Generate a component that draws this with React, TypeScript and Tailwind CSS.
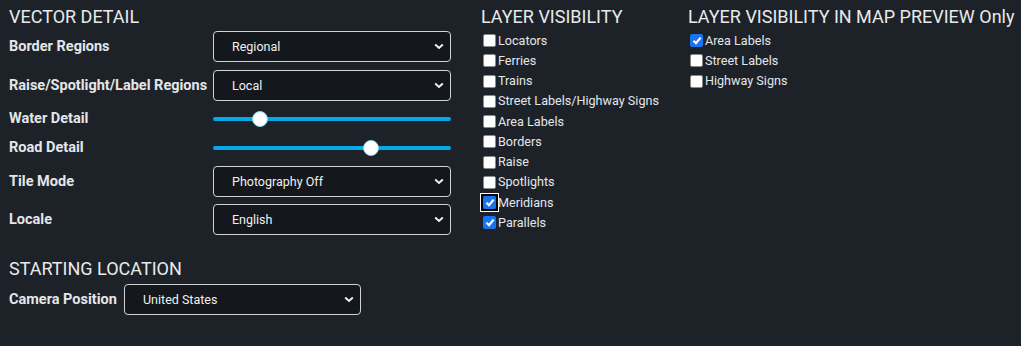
import { ReactNode } from 'react';

function Select({ value, width = 'w-[238px]' }: { value: string; width?: string }) {
  return (
    <div
      className={`${width} h-[31px] flex items-center justify-between rounded-[4px] border border-[#cfd2d6] bg-[#14171b] pl-[18px] pr-[5px] text-[12.5px] text-[#f0f0f0]`}
    >
      <span className="pt-[1px]">{value}</span>
      <svg width="10" height="7" viewBox="0 0 10 7" className="mr-[1px]">
        <polyline points="1.2,1.5 5,5 8.8,1.5" fill="none" stroke="#f2f2f2" strokeWidth="2" />
      </svg>
    </div>
  );
}

function Slider({ pos }: { pos: number }) {
  return (
    <div className="relative w-[238px] h-[18px] flex items-center">
      <div className="w-full h-[4px] rounded-full bg-[#04a9e6]" />
      <div
        className="absolute top-[1px] w-[16px] h-[16px] rounded-full bg-white border border-[#7fd3f2]"
        style={{ left: pos - 8 }}
      />
    </div>
  );
}

function Row({ label, h, mt, children }: { label: string; h: string; mt?: string; children: ReactNode }) {
  return (
    <div className={`flex items-center ${h} ${mt ?? ''}`}>
      <div className="w-[204px] pt-[1px] text-[14.5px] font-bold text-[#e4e6e8]">{label}</div>
      {children}
    </div>
  );
}

function Check({ label, checked, focus }: { label: string; checked?: boolean; focus?: boolean }) {
  return (
    <label className="flex items-center h-[20.25px] text-[12.6px] text-[#e4e6e8]">
      <span
        className={`flex items-center justify-center w-[13px] h-[13px] ml-[2px] mr-[2px] ${
          focus ? 'outline outline-2 outline-black ring-1 ring-white ring-offset-2 ring-offset-black' : ''
        }`}
      >
        {checked ? (
          <span className="w-[13px] h-[13px] rounded-[2px] bg-[#1a73f0] flex items-center justify-center">
            <svg width="10" height="9" viewBox="0 0 10 9">
              <polyline points="1.5,4.8 4,7.2 8.6,1.6" fill="none" stroke="white" strokeWidth="2.2" />
            </svg>
          </span>
        ) : (
          <span className="w-[13px] h-[13px] rounded-[2px] bg-white border border-[#8a8a8a]" />
        )}
      </span>
      <span className="pt-[1px]">{label}</span>
    </label>
  );
}

export default function App() {
  return (
    <div
      className="w-[1021px] h-[346px] bg-[#1d2228] text-[#e6e8ea] flex pl-[9px] overflow-hidden"
      style={{ fontFamily: 'Roboto, "Liberation Sans", sans-serif' }}
    >
      {/* left column */}
      <div className="w-[442px] flex flex-col">
        <h2 className="text-[18px] leading-[22px] mt-[6px] text-[#e8eaec]">VECTOR DETAIL</h2>
        <Row label="Border Regions" h="h-[31px]" mt="mt-[3px]">
          <Select value="Regional" />
        </Row>
        <Row label="Raise/Spotlight/Label Regions" h="h-[31px]" mt="mt-[8px]">
          <Select value="Local" />
        </Row>
        <Row label="Water Detail" h="h-[35px]">
          <Slider pos={47} />
        </Row>
        <Row label="Road Detail" h="h-[23px]">
          <Slider pos={158} />
        </Row>
        <Row label="Tile Mode" h="h-[31px]" mt="mt-[7px]">
          <Select value="Photography Off" />
        </Row>
        <Row label="Locale" h="h-[31px]" mt="mt-[7px]">
          <Select value="English" />
        </Row>

        <h2 className="text-[18px] leading-[22px] mt-[23px] text-[#e8eaec]">STARTING LOCATION</h2>
        <div className="flex items-center h-[31px] mt-[4px]">
          <div className="w-[115px] pt-[1px] text-[14.5px] font-bold text-[#e4e6e8]">Camera Position</div>
          <Select value="United States" width="w-[237px]" />
        </div>
      </div>

      {/* layer visibility */}
      <div className="ml-[30px] w-[207px] flex flex-col">
        <h2 className="text-[18px] leading-[22px] mt-[6px] text-[#e8eaec]">LAYER VISIBILITY</h2>
        <div className="flex flex-col mt-[2.5px]">
          <Check label="Locators" />
          <Check label="Ferries" />
          <Check label="Trains" />
          <Check label="Street Labels/Highway Signs" />
          <Check label="Area Labels" />
          <Check label="Borders" />
          <Check label="Raise" />
          <Check label="Spotlights" />
          <Check label="Meridians" checked focus />
          <Check label="Parallels" checked />
        </div>
      </div>

      {/* map preview */}
      <div className="flex flex-col">
        <h2 className="text-[18px] leading-[22px] mt-[6px] text-[#e8eaec]">LAYER VISIBILITY IN MAP PREVIEW Only</h2>
        <div className="flex flex-col mt-[2.5px]">
          <Check label="Area Labels" checked />
          <Check label="Street Labels" />
          <Check label="Highway Signs" />
        </div>
      </div>
    </div>
  );
}
